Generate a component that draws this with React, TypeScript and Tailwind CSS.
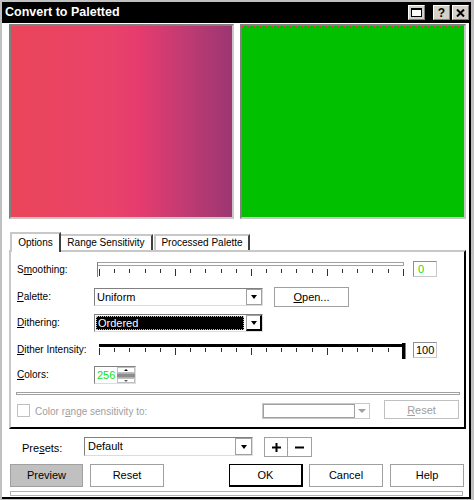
import React from "react";

const ticks = Array.from({ length: 21 }, (_, i) => i);

function Ticks() {
  return (
    <div className="flex justify-between w-[305px]">
      {ticks.map((i) => (
        <div
          key={i}
          className={i % 5 === 0 ? "w-px h-[7px] bg-[#303030]" : "w-px h-[4px] bg-[#303030]"}
        />
      ))}
    </div>
  );
}

function Arrow({ disabled }: { disabled?: boolean }) {
  return (
    <div
      className={
        disabled
          ? "w-0 h-0 border-x-[4px] border-x-transparent border-t-[4px] border-t-[#a0a0a0]"
          : "w-0 h-0 border-x-[3px] border-x-transparent border-t-[4px] border-t-black"
      }
    />
  );
}

export default function App() {
  return (
    <div className="w-[474px] h-[500px] bg-[#c0c0c0] pt-[2px] pl-[2px] pr-[3px] pb-[1px] font-['Liberation_Sans',Arial,sans-serif] text-black overflow-hidden">
      {/* Title bar */}
      <div className="h-[21px] bg-black flex items-center pl-[3px] pr-[2px]">
        <span className="text-white font-bold text-[12.5px] leading-none">Convert to Paletted</span>
        <div className="flex-1" />
        <div className="w-[17px] h-[15px] bg-[#d4d0c8] border border-t-white border-l-white border-b-[#808080] border-r-[#808080] flex items-center justify-center">
          <div className="w-[11px] h-[9px] bg-white border border-black border-t-2" />
        </div>
        <div className="ml-[8px] w-[17px] h-[15px] bg-[#d4d0c8] border border-t-white border-l-white border-b-[#808080] border-r-[#808080] flex items-center justify-center">
          <span className="text-[12px] font-bold leading-none">?</span>
        </div>
        <div className="ml-[2px] w-[17px] h-[15px] bg-[#d4d0c8] border border-t-white border-l-white border-b-[#808080] border-r-[#808080] flex items-center justify-center">
          <svg width="9" height="8" viewBox="0 0 9 8">
            <path d="M1 0.5 L8 7.5 M8 0.5 L1 7.5" stroke="black" strokeWidth="2" />
          </svg>
        </div>
      </div>

      {/* Body */}
      <div className="h-[476px] bg-white border-r-2 border-b-2 border-black flex flex-col">
        {/* Previews */}
        <div className="mt-[1px] ml-[7px] flex gap-[6px]">
          <div className="w-[225px] h-[195px] border-2 border-t-[#808080] border-l-[#808080] border-b-[#c8c8c8] border-r-[#c8c8c8] bg-[linear-gradient(90deg,#ea4559_0%,#e9426a_45%,#e63b6f_58%,#c23b72_78%,#9c3672_100%)]" />
          <div className="w-[226px] h-[195px] border-2 border-t-[#808080] border-l-[#808080] border-b-[#c8c8c8] border-r-[#c8c8c8] bg-[#00c000] flex flex-col">
            <div className="h-[2px] bg-[repeating-linear-gradient(90deg,#e0304f_0px,#e0304f_1px,#00c000_1px,#00c000_3px)]" />
          </div>
        </div>

        {/* Tabs */}
        <div className="mt-[13px] ml-[8px] h-[18px] flex items-end text-[10px] relative z-10">
          <div className="w-[51px] h-[20px] -mb-[2px] bg-white border-t-2 border-l-2 border-r-2 border-t-[#c8c8c8] border-l-[#c8c8c8] border-r-[#404040] flex items-center justify-center leading-none">
            Options
          </div>
          <div className="w-[92px] h-[16px] bg-white border-t-2 border-r-2 border-t-[#c8c8c8] border-r-[#404040] flex items-center justify-center leading-none">
            Range Sensitivity
          </div>
          <div className="ml-[1px] w-[96px] h-[16px] bg-white border-t-2 border-l-2 border-r-2 border-t-[#c8c8c8] border-l-[#c8c8c8] border-r-[#404040] flex items-center justify-center leading-none">
            Processed Palette
          </div>
        </div>

        {/* Panel */}
        <div className="ml-[7px] w-[457px] h-[179px] border-2 border-t-[#c8c8c8] border-l-[#c8c8c8] border-r-black border-b-black flex flex-col text-[10px] leading-[12px]">
          {/* Smoothing */}
          <div className="mt-[7px] h-[20px] flex items-start pl-[6px]">
            <div className="w-[80px] mt-[5px]">
              S<u>m</u>oothing:
            </div>
            <div className="w-[307px] mt-[3px] relative">
              <div className="h-[4px] border border-[#a0a0a0] bg-white" />
              <div className="absolute left-0 top-0 w-px h-[15px] bg-[#808080]" />
              <div className="mt-[3px] pl-[2px]">
                <Ticks />
              </div>
            </div>
            <div className="ml-[9px] mt-[2px] w-[24px] h-[16px] border border-t-[#909090] border-l-[#909090] border-b-[#c8c8c8] border-r-[#c8c8c8] text-[11px] leading-[14px] pl-[4px] text-[#10e010]">
              0
            </div>
          </div>

          {/* Palette */}
          <div className="mt-[8px] h-[20px] flex items-start pl-[6px]">
            <div className="w-[77px] mt-[4px]">
              <u>P</u>alette:
            </div>
            <div className="mt-[1px] w-[169px] h-[18px] flex border border-t-[#808080] border-l-[#808080] border-b-[#dcdcdc] border-r-[#dcdcdc]">
              <div className="flex-1 pl-[2px] text-[11px] leading-[16px]">Uniform</div>
              <div className="w-[16px] h-full border border-[#a0a0a0] flex items-center justify-center">
                <Arrow />
              </div>
            </div>
            <div className="ml-[11px] w-[75px] h-[20px] border border-[#a0a0a0] flex items-center justify-center text-[11px]">
              <span>
                <u>O</u>pen...
              </span>
            </div>
          </div>

          {/* Dithering */}
          <div className="mt-[6px] h-[20px] flex items-start pl-[6px]">
            <div className="w-[77px] mt-[4px]">
              <u>D</u>ithering:
            </div>
            <div className="mt-[1px] w-[169px] h-[18px] flex border border-t-[#808080] border-l-[#808080] border-b-[#dcdcdc] border-r-[#dcdcdc]">
              <div className="flex-1 bg-black m-[1px] mr-[2px] border border-dotted border-[#c0c0c0] pl-[1px] text-white text-[11px] leading-[12px]">
                Ordered
              </div>
              <div className="w-[16px] h-full border border-t-[#a0a0a0] border-l-[#a0a0a0] border-b-black border-r-black border-b-2 border-r-2 flex items-center justify-center">
                <Arrow />
              </div>
            </div>
          </div>

          {/* Dither Intensity */}
          <div className="mt-[8px] h-[19px] flex items-start pl-[6px]">
            <div className="w-[82px] mt-[3px]">
              <u>D</u>ither Intensity:
            </div>
            <div className="w-[305px] relative">
              <div className="mt-[3px] h-[3px] bg-black" />
              <div className="absolute right-[-2px] top-[2px] w-[4px] h-[16px] bg-black border-r border-[#808080]" />
              <div className="mt-[1px]">
                <Ticks />
              </div>
            </div>
            <div className="ml-[9px] mt-[1px] w-[24px] h-[16px] border border-t-[#909090] border-l-[#909090] border-b-[#c8c8c8] border-r-[#c8c8c8] text-[11px] leading-[14px] pl-[2px]">
              100
            </div>
          </div>

          {/* Colors */}
          <div className="mt-[5px] h-[20px] flex items-start pl-[6px]">
            <div className="w-[77px] mt-[4px]">
              <u>C</u>olors:
            </div>
            <div className="mt-[1px] w-[42px] h-[18px] flex border border-t-[#808080] border-l-[#808080] border-b-[#dcdcdc] border-r-[#dcdcdc] bg-white">
              <div className="flex-1 pl-[2px] text-[11px] leading-[16px] text-[#10e010]">256</div>
              <div className="w-[18px] flex flex-col">
                <div className="h-[6px] border border-[#c0c0c0] flex items-center justify-center">
                  <div className="w-0 h-0 border-x-[2px] border-x-transparent border-b-[2px] border-b-black" />
                </div>
                <div className="h-[5px] bg-[#8c8c8c] border-y border-[#b0b0b0]" />
                <div className="h-[5px] border border-[#c0c0c0] flex items-center justify-center">
                  <div className="w-0 h-0 border-x-[2px] border-x-transparent border-t-[2px] border-t-[#606060]" />
                </div>
              </div>
            </div>
          </div>

          {/* Separator */}
          <div className="mt-[7px] ml-[5px] w-[444px] h-[3px] border border-[#a0a0a0]" />

          {/* Color range sensitivity */}
          <div className="mt-[5px] h-[20px] flex items-start pl-[6px] pr-[5px]">
            <div className="mt-[4px] w-[13px] h-[13px] border border-[#c0c0c0] bg-white" />
            <div className="ml-[5px] mt-[6px] text-[#a0a0a0]">
              Color r<u>a</u>nge sensitivity to:
            </div>
            <div className="flex-1" />
            <div className="mt-[3px] w-[108px] h-[16px] border border-[#c8c8c8] flex items-center">
              <div className="w-[92px] h-[14px] border border-[#a0a0a0] bg-white" />
              <div className="flex-1 flex items-center justify-center">
                <Arrow disabled />
              </div>
            </div>
            <div className="ml-[14px] w-[75px] h-[19px] border border-[#c0c0c0] flex items-center justify-center text-[11px] text-[#a0a0a0]">
              <span>
                <u>R</u>eset
              </span>
            </div>
          </div>
        </div>

        {/* Presets */}
        <div className="mt-[8px] h-[20px] flex items-start pl-[20px] text-[11px] leading-[13px]">
          <div className="w-[62px] mt-[5px]">
            Pre<u>s</u>ets:
          </div>
          <div className="w-[169px] h-[19px] flex border border-t-[#808080] border-l-[#808080] border-b-[#dcdcdc] border-r-[#dcdcdc]">
            <div className="flex-1 pl-[3px] leading-[17px]">Default</div>
            <div className="w-[17px] h-full border border-[#a0a0a0] flex items-center justify-center">
              <Arrow />
            </div>
          </div>
          <div className="ml-[11px] w-[24px] h-[20px] border border-[#a0a0a0] flex items-center justify-center">
            <svg width="9" height="9" viewBox="0 0 9 9">
              <path d="M4.5 0 V9 M0 4.5 H9" stroke="black" strokeWidth="2" />
            </svg>
          </div>
          <div className="w-[24px] h-[20px] border border-l-0 border-[#a0a0a0] flex items-center justify-center">
            <svg width="9" height="9" viewBox="0 0 9 9">
              <path d="M0 4.5 H9" stroke="black" strokeWidth="2" />
            </svg>
          </div>
        </div>

        {/* Buttons */}
        <div className="mt-[7px] h-[23px] flex pl-[8px] text-[11px]">
          <div className="w-[73px] h-[23px] bg-[#c0c0c0] border border-[#a0a0a0] flex items-center justify-center">
            Preview
          </div>
          <div className="ml-[7px] w-[74px] h-[23px] border border-[#a0a0a0] flex items-center justify-center">
            Reset
          </div>
          <div className="ml-[65px] w-[74px] h-[23px] border border-black border-b-2 border-r-2 flex items-center justify-center">
            OK
          </div>
          <div className="ml-[6px] w-[74px] h-[23px] border border-[#a0a0a0] flex items-center justify-center">
            Cancel
          </div>
          <div className="ml-[7px] w-[74px] h-[23px] border border-[#a0a0a0] flex items-center justify-center">
            Help
          </div>
        </div>

        {/* Status strip */}
        <div className="mt-[4px] ml-[8px] w-[453px] h-[5px] border border-[#b0b0b0]" />
      </div>
    </div>
  );
}
